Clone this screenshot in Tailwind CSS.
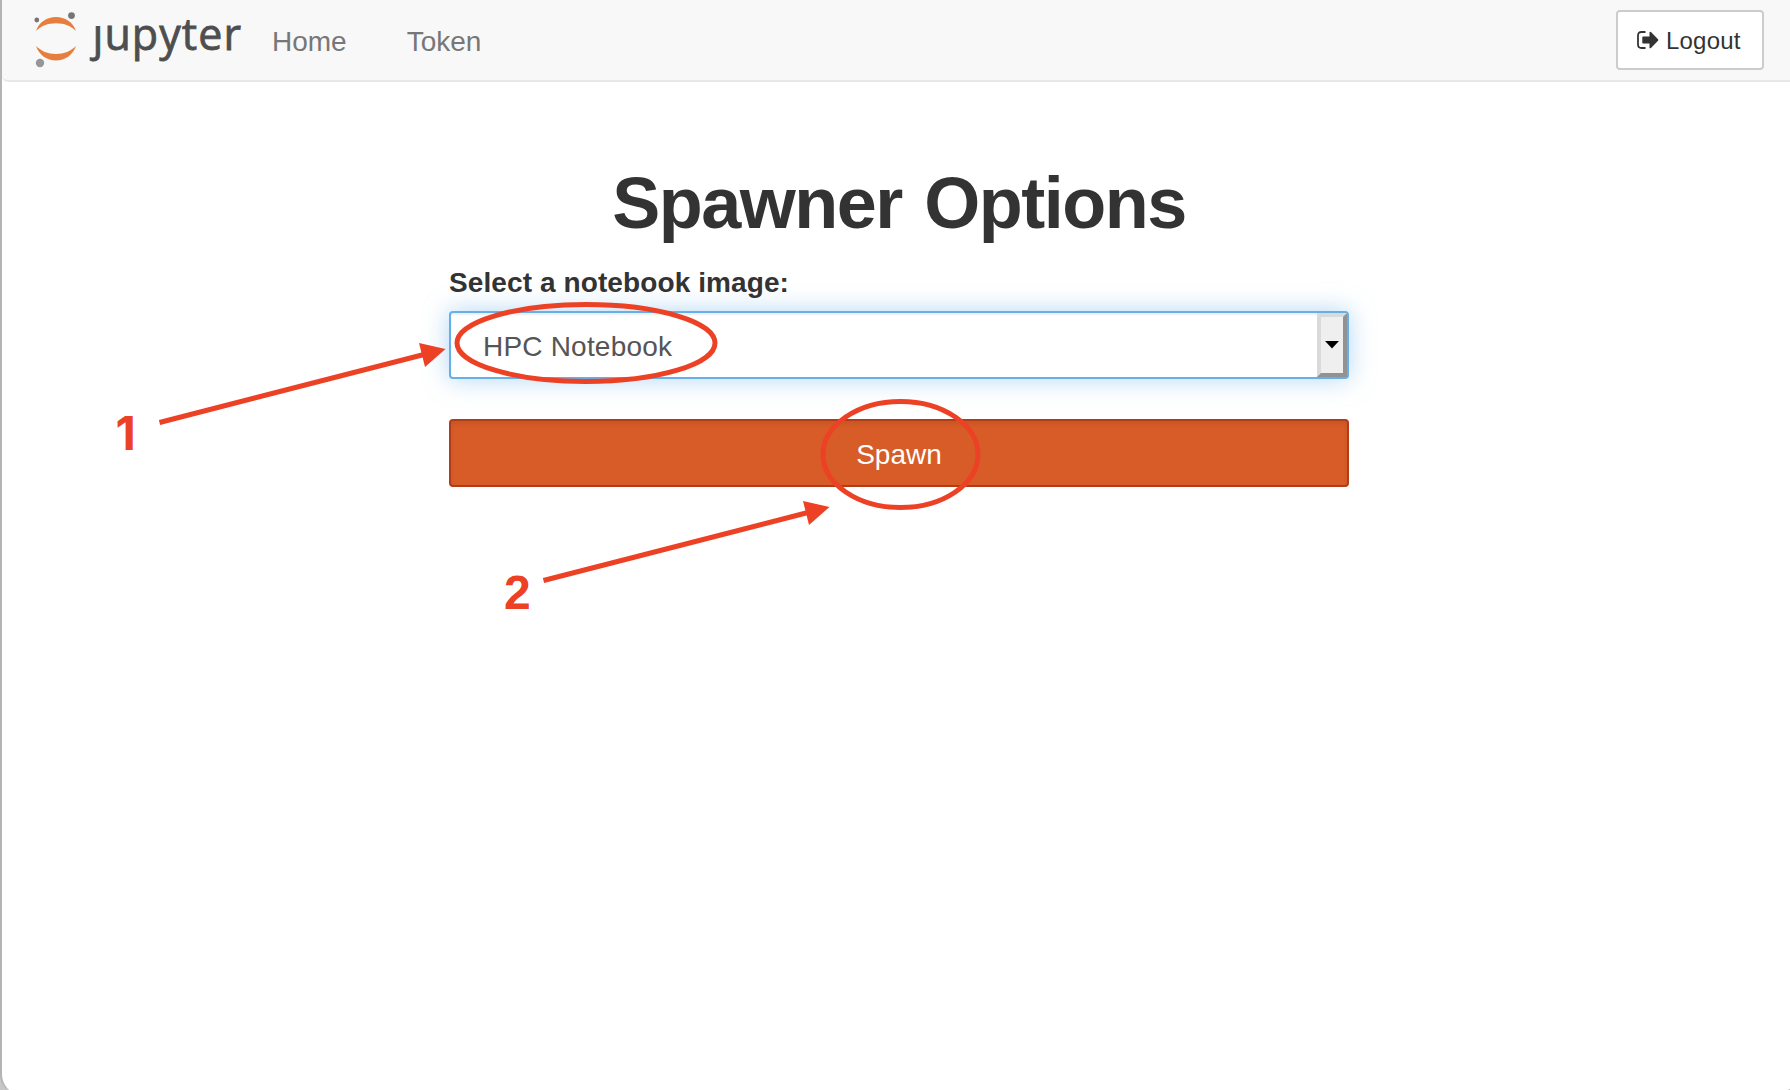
<!DOCTYPE html>
<html lang="en">
<head>
<meta charset="utf-8">
<title>JupyterHub</title>
<script src="https://cdn.jsdelivr.net/npm/@tailwindcss/browser@4"></script>
</head>
<body class="relative h-[1090px] w-[1790px] overflow-hidden bg-[#c6c6c6] font-['Liberation_Sans',Arial,sans-serif] text-[#333]">
<div class="h-[1094px] w-[1796px] border-l-2 border-[#b4b4b4] rounded-b-[20px] bg-white">
  <nav class="flex h-[82px] w-[1790px] items-start rounded-bl-md border-b-2 border-[#e7e7e7] bg-[#f8f8f8] pr-[28px]">
    <a class="ml-[28px] block">
      <svg class="block" width="216" height="74" viewBox="30 0 216 74">
        <defs><clipPath id="wordmark"><path d="M86 26H104V12H246V74H86Z"/></clipPath></defs>
        <path d="M36 31C39 22 47 17 56 17S73 22 76 31C71 26 64 23.3 56 23.3S41 26 36 31Z" fill="#e67f3e"/>
        <path d="M36 46C41 51 48 54 56 54S71 51 76 46C73 55 65 60.5 56 60.5S39 55 36 46Z" fill="#e67f3e"/>
        <circle cx="36.8" cy="20" r="2.4" fill="#767677"/>
        <circle cx="71.5" cy="15.6" r="3.4" fill="#767677"/>
        <circle cx="40" cy="63" r="4.2" fill="#989798"/>
        <text x="92.5" y="50.3" clip-path="url(#wordmark)" class="font-['Open_Sans',sans-serif] text-[43px]" textLength="148.5" fill="#4e4e4e" stroke="#4e4e4e" stroke-width="0.8">jupyter</text>
      </svg>
    </a>
    <a class="ml-[26px] mt-[22px] text-[28px] leading-10 text-[#777]">Home</a>
    <a class="ml-[60px] mt-[22px] text-[28px] leading-10 text-[#777]">Token</a>
    <a class="ml-auto mt-[10px] flex h-[60px] w-[148px] items-center rounded border-2 border-[#ccc] bg-white pl-[19px] text-[24px]">
      <svg class="mr-[7px]" width="22" height="18" viewBox="0 0 22 18">
        <path d="M8.5 1H4.5Q1 1 1 4.5V13.5Q1 17 4.5 17H8.5" fill="none" stroke="#333" stroke-width="1.8"/>
        <path d="M6 5.5H12.5V1.2Q13 .3 14 1L21 8.2Q21.8 9 21 9.8L14 17Q13 17.7 12.5 16.8V12.5H6Q5.3 12.5 5.3 11.8V6.2Q5.3 5.5 6 5.5Z" fill="#333"/>
      </svg>
      <span class="pt-[2px] tracking-[0.2px]">Logout</span>
    </a>
  </nav>
  <main class="ml-[447px] w-[900px]">
    <h1 class="mt-[81px] text-center text-[72px] leading-[80px] font-bold tracking-[-1.5px] [word-spacing:4px] whitespace-nowrap">Spawner Options</h1>
    <label class="mt-[20px] block text-[28px] leading-[40px] font-bold tracking-[0.1px]">Select a notebook image:</label>
    <div class="mt-[8px] flex h-[68px] items-stretch rounded border-2 border-[#66afe9] bg-white shadow-[inset_0_2px_2px_rgba(0,0,0,0.075),0_0_24px_rgba(102,175,233,0.5)]">
      <span class="flex-1 pt-[14px] pl-[32px] text-[28px] leading-[40px] tracking-[0.2px] text-[#555]">HPC Notebook</span>
      <span class="flex w-[30px] items-center justify-center border-4 border-t-[#dadada] border-r-[#929292] border-b-[#929292] border-l-[#dadada] bg-[#efefef]">
        <svg width="14" height="8" viewBox="0 0 14 8"><path d="M0 0H14L7 7.5Z" fill="#000"/></svg>
      </span>
    </div>
    <button class="mt-[40px] block h-[68px] w-full rounded border-2 border-[#b33b1a] bg-[#d85c27] pt-[3px] text-center text-[28px] text-white shadow-[inset_0_3px_5px_rgba(0,0,0,0.08)]">Spawn</button>
  </main>
</div>
<svg class="pointer-events-none absolute inset-0" width="1790" height="1090" viewBox="0 0 1790 1090">
  <g fill="none" stroke="#ec4125" stroke-width="5">
    <ellipse cx="586" cy="343" rx="129" ry="38.5"/>
    <ellipse cx="900.5" cy="454.5" rx="77.5" ry="53"/>
    <path d="M159.5 422.5L424 354.5M543.5 580.5L808 512.5"/>
  </g>
  <path d="M445.5 349L419 343L425 367ZM829.5 507L803 501L809 525Z" fill="#ec4125"/>
  <g fill="#ec4125" class="font-bold">
    <text x="115.5" y="450" class="font-['Inter',sans-serif] text-[47px]">1</text>
    <text x="504" y="609" class="text-[48px]">2</text>
  </g>
</svg>
</body>
</html>
